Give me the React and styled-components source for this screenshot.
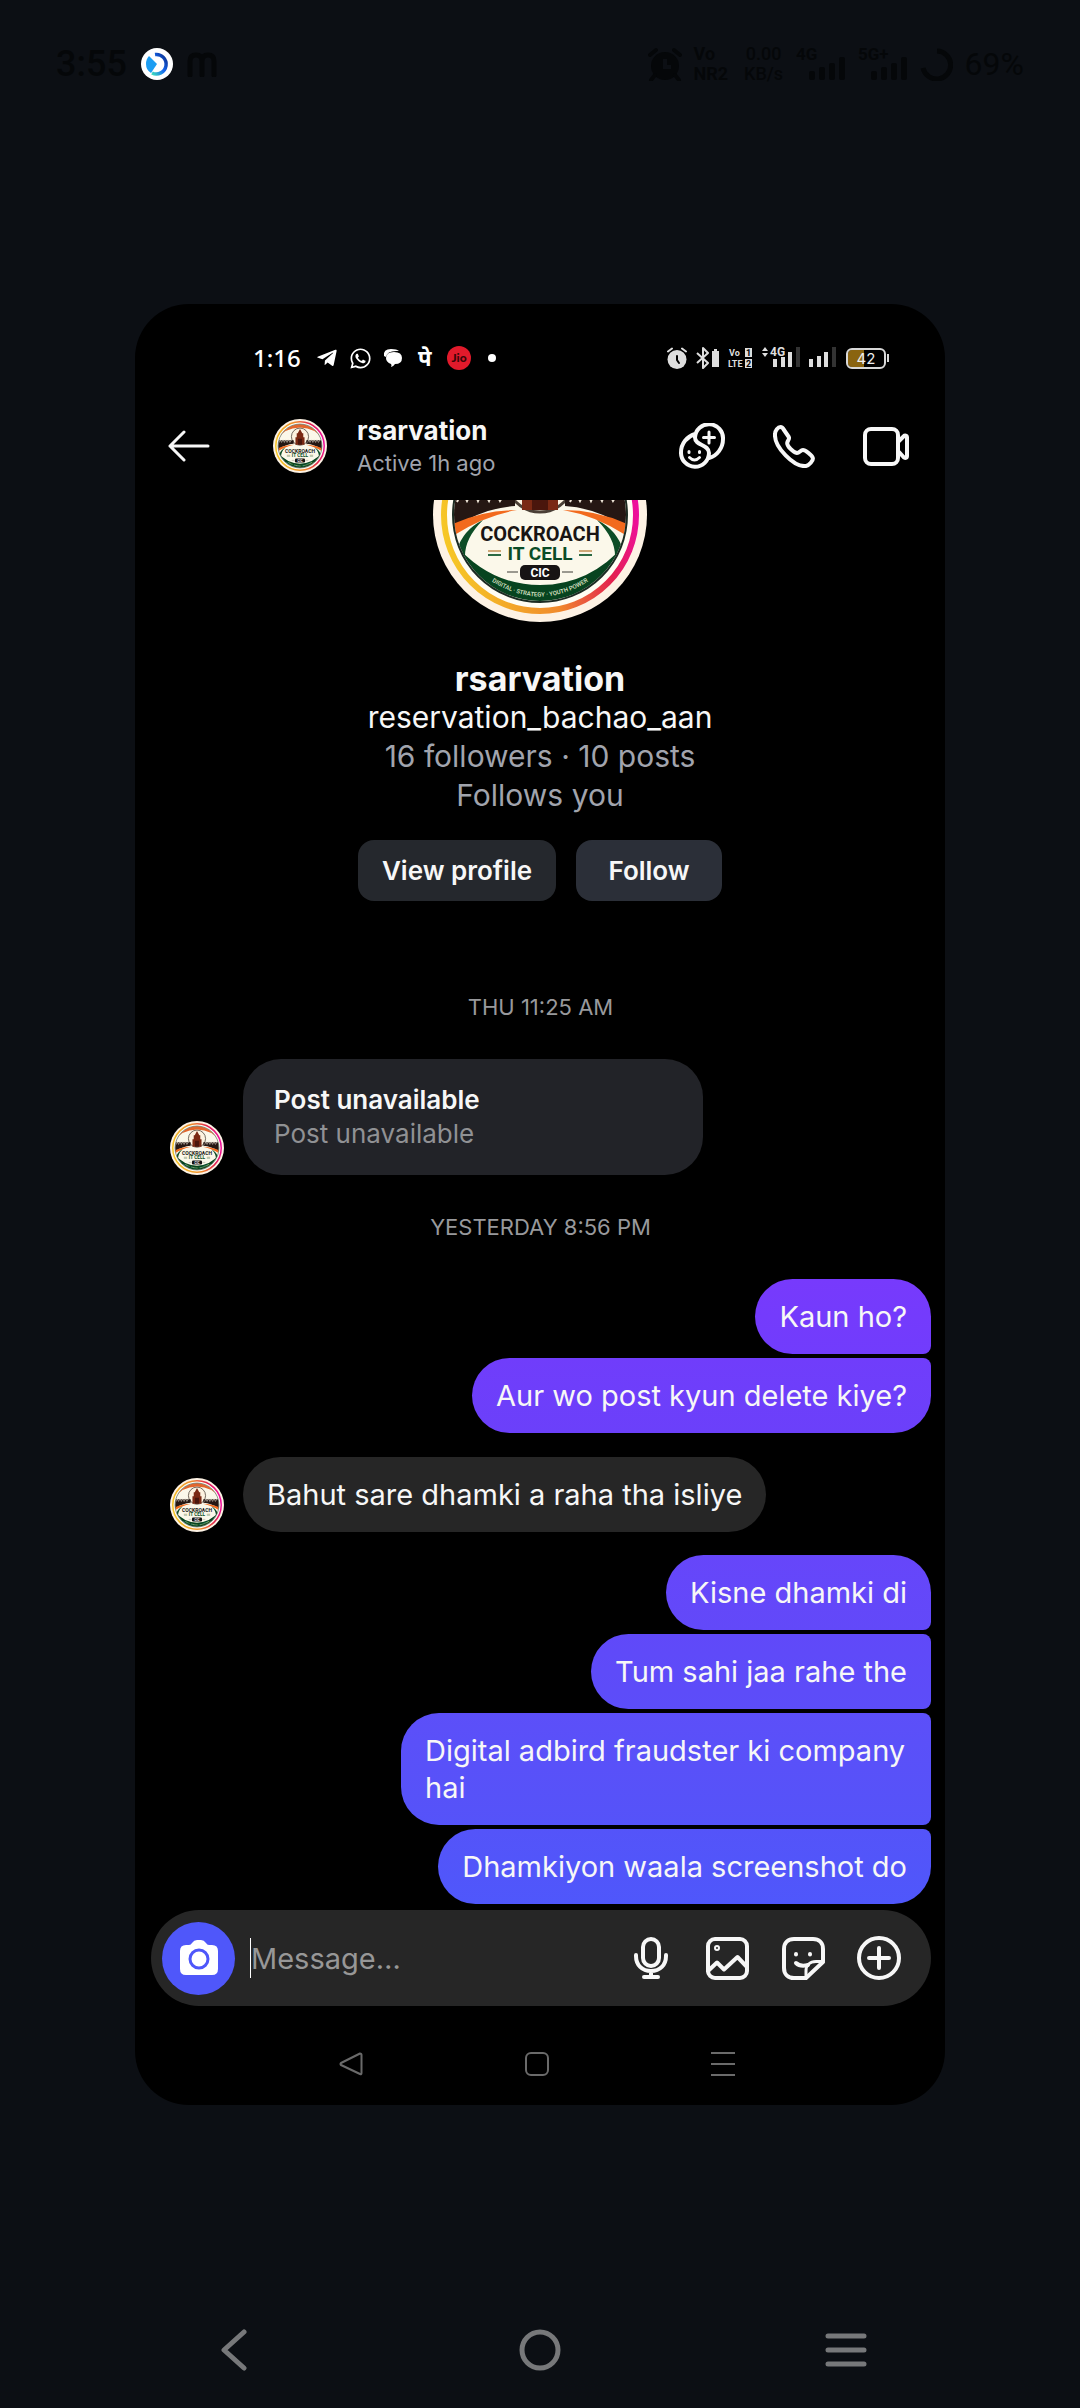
import React, { useId } from "react";
import styled, { createGlobalStyle } from "styled-components";
import { FaTelegramPlane, FaWhatsapp } from "react-icons/fa";

const GlobalStyle = createGlobalStyle`
  * { box-sizing: border-box; }
  body {
    margin: 0;
    background: #0c0f14;
    font-family: Inter, "Noto Sans", sans-serif;
  }
  button, input { font: inherit; margin: 0; padding: 0; border: 0; background: none; color: inherit; }
  h1, h2, p { margin: 0; font-weight: 400; }
`;

const Page = styled.div`
  min-height: 100vh;
  display: flex;
  flex-direction: column;
  align-items: center;
  background: #0c0f14;
`;

/* ---------- Outer system bars ---------- */

const SystemBar = styled.header`
  width: 100%;
  height: 128px;
  padding: 0 56px;
  display: flex;
  align-items: center;
  justify-content: space-between;
  color: #050709;
  font-family: Roboto, sans-serif;
`;

const Cluster = styled.div`
  display: flex;
  align-items: center;
  gap: ${(p) => p.$gap}px;
`;

const Clock = styled.span`
  font-family: Roboto, sans-serif;
  font-size: 36px;
  font-weight: 500;
  line-height: 40px;
`;

const PhoneClock = styled.span`
  margin-right: 4px;
  font-family: "Noto Sans", sans-serif;
  font-size: 24px;
  font-weight: 500;
  line-height: 32px;
`;

const BatteryText = styled.span`
  font-size: 32px;
  line-height: 40px;
`;

const Stacked = styled.span`
  display: flex;
  flex-direction: column;
  align-items: ${(p) => p.$align || "flex-start"};
  width: ${(p) => p.$width}px;
  font-size: 18px;
  line-height: 20px;
  font-weight: ${(p) => p.$weight};
`;

const SystemNav = styled.nav`
  width: 100%;
  height: 116px;
  margin-top: auto;
  padding: 0 213px;
  display: flex;
  align-items: center;
  justify-content: space-between;
  color: #77787a;
`;

const IconButton = styled.button`
  display: flex;
  align-items: center;
  justify-content: center;
  width: ${(p) => p.$size}px;
  height: ${(p) => p.$size}px;
  flex: none;
  cursor: pointer;
`;

/* ---------- Phone card ---------- */

const Phone = styled.main`
  width: 75%;
  margin-top: 176px;
  border-radius: 54px;
  overflow: hidden;
  background: #000;
  color: #f7f7f7;
`;

const PhoneStatus = styled.div`
  height: 108px;
  padding: 0 56px 0 118px;
  display: flex;
  align-items: center;
  justify-content: space-between;
  color: #fff;
`;

const PhoneBattery = styled.span`
  display: flex;
  align-items: center;
  justify-content: center;
  width: 40px;
  height: 21px;
  border: 2px solid #d8d8d8;
  border-radius: 6px;
  background: linear-gradient(90deg, #8a6410 44%, #000 44%);
  background-clip: padding-box;
  color: #eee;
  font-size: 15px;
  line-height: 17px;
`;

const Glyph = styled.span`
  width: 22px;
  font-size: 22px;
  line-height: 24px;
  font-weight: 700;
  text-align: center;
`;

const ChatHeader = styled.header`
  height: 88px;
  padding: 0 36px 20px 33px;
  display: flex;
  align-items: center;
`;

const HeaderAvatar = styled.div`
  display: flex;
  margin: 0 30px 0 63px;
`;

const HeaderName = styled.div`
  flex: 1;
  min-width: 0;
`;

const Title = styled.h1`
  font-size: 26px;
  line-height: 34px;
  font-weight: 700;
`;

const Presence = styled.p`
  font-size: 22px;
  line-height: 30px;
  color: #a1a4ad;
`;

const Profile = styled.section`
  display: flex;
  flex-direction: column;
  align-items: center;
`;

const HeroClip = styled.div`
  height: 122px;
  margin-bottom: 37px;
  overflow: hidden;
  display: flex;
  align-items: flex-end;
`;

const ProfileName = styled.h2`
  font-size: 34px;
  line-height: 39px;
  font-weight: 700;
`;

const ProfileLine = styled.p`
  font-size: 30px;
  line-height: 39px;
  color: ${(p) => (p.$muted ? "#a1a4ad" : "#f7f7f7")};
`;

const Actions = styled.div`
  display: flex;
  gap: 20px;
  margin-top: 25px;
`;

const ActionButton = styled.button`
  height: 61px;
  min-width: 146px;
  padding: 0 24px;
  border-radius: 16px;
  background: ${(p) => p.$tone};
  font-size: 26px;
  line-height: 32px;
  font-weight: 600;
  cursor: pointer;
`;

const Thread = styled.section`
  display: flex;
  flex-direction: column;
  margin-top: 54px;
  padding: 0 14px 6px 35px;
`;

const DateLabel = styled.p`
  margin: 37px 0;
  padding-right: 20px;
  text-align: center;
  font-size: 22px;
  line-height: 30px;
  color: #98999c;
`;

const Group = styled.div`
  display: flex;
  flex-direction: column;
  align-items: flex-end;
  gap: 4px;
`;

const Received = styled.div`
  display: flex;
  align-items: flex-end;
  gap: 19px;
  margin: ${(p) => (p.$spaced ? "24px 0 23px" : "0")};
`;

const PostCard = styled.article`
  width: 460px;
  padding: 24px 31px;
  border-radius: 38px;
  background: #222328;
  font-size: 26px;
  line-height: 34px;
`;

const PostTitle = styled.h2`
  font-size: 26px;
  line-height: 34px;
  font-weight: 600;
`;

const PostNote = styled.p`
  color: #909194;
`;

const Bubble = styled.p`
  max-width: ${(p) => (p.$sent ? "530px" : "80%")};
  padding: 19px 24px;
  border-radius: ${(p) => p.$corners};
  background: ${(p) => p.$fill};
  font-size: 29px;
  line-height: 37px;
`;

const Composer = styled.form`
  display: flex;
  align-items: center;
  height: 96px;
  margin: 0 14px 0 16px;
  padding: 0 30px 0 11px;
  border-radius: 48px;
  background: #262626;
`;

const CameraButton = styled.button`
  display: flex;
  align-items: center;
  justify-content: center;
  flex: none;
  width: 73px;
  height: 73px;
  border-radius: 50%;
  background: #4f57fa;
  cursor: pointer;
`;

const MessageInput = styled.input`
  flex: 1;
  min-width: 0;
  height: 40px;
  margin-left: 15px;
  border-left: 1px solid #fff;
  outline: none;
  font-size: 29px;
  line-height: 36px;
  &::placeholder { color: #979797; opacity: 1; }
`;

const PhoneNav = styled.nav`
  height: 99px;
  padding: 16px 210px 0 204px;
  display: flex;
  align-items: center;
  justify-content: space-between;
  color: #6a6a6a;
`;

/* ---------- Drawings ---------- */

const Stroke = ({ w, h, sw = 4, children }) => (
  <svg width={w} height={h} viewBox={`0 0 ${w} ${h}`} fill="none" stroke="currentColor"
    strokeWidth={sw} strokeLinecap="round" strokeLinejoin="round" aria-hidden="true">
    {children}
  </svg>
);

function Emblem({ size }) {
  const id = useId();
  return (
    <svg width={size} height={size} viewBox="0 0 214 214" role="img" aria-label="Cockroach IT Cell">
      <defs>
        <linearGradient id={`${id}ring`} x1="0" y1="0.6" x2="1" y2="0.4">
          <stop offset="0" stopColor="#f6c726" />
          <stop offset="0.5" stopColor="#f08a2c" />
          <stop offset="0.8" stopColor="#e3204f" />
          <stop offset="1" stopColor="#ee0ea0" />
        </linearGradient>
        <clipPath id={`${id}disc`}><circle cx="107" cy="107" r="86" /></clipPath>
        <path id={`${id}motto`} d="M42 161Q107 216 172 161" />
      </defs>
      <circle cx="107" cy="107" r="107" fill="#fdf2e4" />
      <circle cx="107" cy="107" r="96" fill="#fffdf3" stroke={`url(#${id}ring)`} strokeWidth="6" />
      <g clipPath={`url(#${id}disc)`}>
        <rect width="214" height="214" fill="#fbf8ea" />
        <path d="M20 80 Q30 14 107 14 Q184 14 194 80 Q170 36 107 34 Q44 36 20 80Z" fill="#e2662c" />
        <circle cx="107" cy="70" r="34" fill="#fdf3e0" stroke="#4b4036" strokeWidth="3" />
        <path d="M20 84h62v14q-32 2-62 22z M194 84h-62v14q32 2 62 22z" fill="#251713" />
        <path d="M24 94l5-11 5 10 6-12 5 12 5-11 6 11 5-12 6 12 6-10M137 94l5-11 5 10 6-12 5 12 5-11 6 11 5-12 6 12 6-10" stroke="#efe6d8" strokeWidth="2" fill="none" />
        <path d="M89 102V72h5V56h4l9-16 9 16h4v16h5v30z" fill="#7a2913" />
        <path d="M99 102V78h16v24z" fill="#4a160c" />
        <path d="M20 116Q50 102 84 102Q50 108 20 128z M194 116Q164 102 130 102Q164 108 194 128z" fill="#f26a1d" />
        <path d="M50 112Q30 122 24 142L32 148Q32 130 50 112z M164 112Q184 122 190 142L182 148Q182 130 164 112z" fill="#0d4d26" />
        <path d="M20 134Q56 177 107 177Q158 177 194 134V214H20z" fill="#07441f" />
      </g>
      <circle cx="107" cy="107" r="87" fill="none" stroke="#1c2b22" strokeWidth="2" />
      <g textAnchor="middle" fontFamily="Roboto, sans-serif" fontWeight="700">
        <text x="107" y="133" fontSize="20" fill="#191514">COCKROACH</text>
        <text x="107" y="152" fontSize="19" fill="#0b4c27">IT CELL</text>
        <rect x="87" y="157" width="40" height="15" rx="5" fill="#171414" />
        <text x="107" y="169" fontSize="12" fill="#fff">CIC</text>
        <text fontSize="6" fontWeight="500" fill="#dfe6c9">
          <textPath href={`#${id}motto`} startOffset="50%">DIGITAL · STRATEGY · YOUTH POWER</textPath>
        </text>
      </g>
      <path d="M55 143h13M146 143h13" stroke="#cfa878" strokeWidth="2" />
      <path d="M55 147h13M146 147h13" stroke="#2b6a44" strokeWidth="2" />
      <path d="M74 164h11M129 164h11" stroke="#3a3a34" strokeWidth="1" />
    </svg>
  );
}

const AppBadge = () => (
  <svg width="32" height="32" viewBox="0 0 32 32" aria-hidden="true">
    <defs>
      <linearGradient id="badge" x1="0" y1="1" x2="1" y2="0">
        <stop offset="0" stopColor="#3bdcc0" />
        <stop offset="0.5" stopColor="#1668f0" />
        <stop offset="1" stopColor="#0a2a86" />
      </linearGradient>
    </defs>
    <circle cx="16" cy="16" r="16" fill="#fff" />
    <path d="M14 6.500A9.800 9.800 0 1 1 11 25" fill="none" stroke="url(#badge)" strokeWidth="3.500" />
    <path d="M8 8L16 16L10 25Q5 22 5 16Q5 11 8 8z" fill="#1c9df2" />
  </svg>
);

const Alarm = ({ hands }) => (
  <svg width="34" height="34" viewBox="0 0 34 34" fill="none" strokeLinecap="round" aria-hidden="true">
    <circle cx="17" cy="19" r="14" fill="currentColor" />
    <path d="M2 8l6-5M32 8l-6-5M7 28l-4 5M27 28l4 5" stroke="currentColor" strokeWidth="4" />
    <path d="M17 12v8h6" stroke={hands} strokeWidth="4" strokeLinecap="butt" />
  </svg>
);

const PhoneAlarm = () => (
  <svg width="20" height="22" viewBox="0 0 20 22" fill="none" strokeLinecap="round" aria-hidden="true">
    <circle cx="10" cy="12.500" r="9.500" fill="#dedede" />
    <path d="M1 4.500l4-3M19 4.500l-4-3" stroke="#dedede" strokeWidth="2" />
    <path d="M10 9v4l2 3" stroke="#000" strokeWidth="2" />
  </svg>
);

const BluetoothBattery = () => (
  <svg width="23" height="22" viewBox="0 0 23 22" aria-hidden="true">
    <path d="M1 6L12 16L7 21V1L12 6L1 16" fill="none" stroke="#dedede" strokeWidth="2" strokeLinejoin="round" />
    <path d="M16 4h2V2h3v2h2v16h-7z" fill="#dedede" />
  </svg>
);

const Signal = ({ label }) => (
  <svg width="50" height="44" viewBox="0 0 50 44" fill="currentColor" aria-hidden="true">
    <text x="0" y="18" fontSize="17" fontWeight="700" fontFamily="Roboto, sans-serif">{label}</text>
    <rect x="13" y="29" width="6" height="9" rx="2" />
    <rect x="23" y="25" width="6" height="13" rx="2" />
    <rect x="33" y="21" width="6" height="17" rx="2" />
    <rect x="43" y="15" width="6" height="23" rx="2" />
  </svg>
);

const PhoneSignal = ({ label }) => (
  <svg width={label ? 38 : 28} height="32" viewBox={label ? "0 0 38 32" : "0 0 28 32"} fill="#dedede" aria-hidden="true">
    {label ? (
      <>
        <path d="M0 9l3-4 3 4zM0 11h6l-3 4z" />
        <text x="8" y="14" fontSize="12" fontWeight="700" fontFamily="Roboto, sans-serif">{label}</text>
        <path d="M11 17h4v8h-4zM19 15h4v10h-4zM26 10h4v15h-4z" />
        <path d="M34 5h4v20h-4z" fill="#333" />
      </>
    ) : (
      <>
        <path d="M0 17h4v8H0zM8 14h4v11H8zM15 10h4v15h-4z" />
        <path d="M23 5h4v20h-4z" fill="#333" />
      </>
    )}
  </svg>
);

const VoLte = () => (
  <svg width="25" height="26" viewBox="0 0 25 26" fill="#dedede" aria-hidden="true"
    fontFamily="Roboto, sans-serif" fontWeight="700" fontSize="9">
    <text x="1" y="11">Vo</text>
    <text x="0" y="22">LTE</text>
    <rect x="17" y="3" width="7" height="9" />
    <rect x="17" y="14" width="7" height="9" />
    <text x="18" y="11" fill="#000">1</text>
    <text x="18" y="22" fill="#000">2</text>
  </svg>
);

const ChatDots = () => (
  <svg width="20" height="20" viewBox="0 0 20 20" aria-hidden="true">
    <path d="M1 8Q0 1 8 1q6 0 8 2Q4 2 3 9z" fill="#fff" />
    <path d="M11 4q8 0 8 6t-7 6q-2 3-4 3 1-2 0-3-5-2-5-6 0-6 8-6z" fill="#fff" />
  </svg>
);

const Jio = () => (
  <svg width="24" height="24" viewBox="0 0 24 24" aria-hidden="true">
    <circle cx="12" cy="12" r="12" fill="#e11a2b" />
    <text x="12" y="16" textAnchor="middle" fontSize="12" fontWeight="900" fontFamily="Lato, sans-serif" fill="#3a0508">Jio</text>
  </svg>
);

const Camera = () => (
  <svg width="40" height="36" viewBox="0 0 40 36" aria-hidden="true">
    <path d="M7 5h3q2 0 3-2 2-3 5-3h4q3 0 5 3 1 2 3 2h3q6 0 6 6v18q0 6-6 6H7q-6 0-6-6V11q0-6 6-6z" fill="#fff" />
    <circle cx="20" cy="19" r="9" fill="none" stroke="#4f57fa" strokeWidth="3" />
  </svg>
);

/* ---------- Data ---------- */

const FIRST = "38px 38px 8px 38px";
const MIDDLE = "38px 8px 8px 38px";
const LAST = "38px 8px 38px 38px";

const opening = [
  { text: "Kaun ho?", from: "#773afc", to: "#713cfc", corners: FIRST },
  { text: "Aur wo post kyun delete kiye?", from: "#703dfb", to: "#6b40fa", corners: LAST },
];

const reply = [
  { text: "Kisne dhamki di", from: "#6646fa", to: "#6249f9", corners: FIRST },
  { text: "Tum sahi jaa rahe the", from: "#6049f9", to: "#5c4df9", corners: MIDDLE },
  { text: "Digital adbird fraudster ki company hai", from: "#5c4ff9", to: "#5553f9", corners: MIDDLE },
  { text: "Dhamkiyon waala screenshot do", from: "#5454f9", to: "#4f57fb", corners: LAST },
];

const SentGroup = ({ items }) => (
  <Group>
    {items.map((m) => (
      <Bubble key={m.text} $sent $corners={m.corners} $fill={`linear-gradient(${m.from}, ${m.to})`}>{m.text}</Bubble>
    ))}
  </Group>
);

export default function App() {
  return (
    <Page>
      <GlobalStyle />
      <SystemBar>
        <Cluster $gap={14}>
          <Clock>3:55</Clock>
          <AppBadge />
          <Stroke w={30} h={26} sw={5}>
            <path d="M3 24V10Q3 4 9 4Q15 4 15 10V24M15 10Q15 4 21 4Q27 4 27 10V24" />
          </Stroke>
        </Cluster>
        <Cluster $gap={12}>
          <Alarm hands="#0c0f14" />
          <Stacked $width={38} $weight={700}><span>Vo</span><span>NR2</span></Stacked>
          <Stacked $width={40} $align="center" $weight={500}><span>0.00</span><span>KB/s</span></Stacked>
          <Signal label="4G" />
          <Signal label="5G+" />
          <Stroke w={33} h={33} sw={5}><path d="M17 3A14 14 0 1 1 3 20" strokeLinecap="butt" /></Stroke>
          <BatteryText>69%</BatteryText>
        </Cluster>
      </SystemBar>

      <Phone>
        <PhoneStatus>
          <Cluster $gap={11}>
            <PhoneClock>1:16</PhoneClock>
            <FaTelegramPlane size={22} />
            <FaWhatsapp size={23} />
            <ChatDots />
            <Glyph>पे</Glyph>
            <Jio />
            <svg width="24" height="8" aria-hidden="true"><circle cx="10" cy="4" r="4" fill="#fff" /></svg>
          </Cluster>
          <Cluster $gap={9}>
            <PhoneAlarm />
            <BluetoothBattery />
            <VoLte />
            <PhoneSignal label="4G" />
            <PhoneSignal />
            <Cluster $gap={1}>
              <PhoneBattery>42</PhoneBattery>
              <svg width="2" height="8" aria-hidden="true"><path d="M0 0h2v8H0z" fill="#d8d8d8" /></svg>
            </Cluster>
          </Cluster>
        </PhoneStatus>

        <ChatHeader>
          <IconButton $size={42} aria-label="Back">
            <Stroke w={42} h={32} sw={3}><path d="M40 16H2M16 2L2 16L16 30" /></Stroke>
          </IconButton>
          <HeaderAvatar><Emblem size={54} /></HeaderAvatar>
          <HeaderName>
            <Title>rsarvation</Title>
            <Presence>Active 1h ago</Presence>
          </HeaderName>
          <Cluster $gap={46}>
            <IconButton $size={46} aria-label="Create AI sticker">
              <Stroke w={46} h={46}>
                <path d="M16 11C8 13.500 2 20.500 2 29.500A14 14 0 0 0 30 30C30 21 16 23 16 14.500A14 14 0 0 1 44 16C44 25 38 33 30 35" />
                <path d="M30 9V20M24.500 14.500H35.500" strokeWidth="3" />
                <path d="M10 28.500V29.500M20.500 28.500V29.500M10.500 34.500Q15.500 39.500 20.500 34.500" strokeWidth="3" />
              </Stroke>
            </IconButton>
            <IconButton $size={46} aria-label="Voice call">
              <Stroke w={42} h={43}>
                <path d="M2 9C2 5.500 5 2 7.500 2C9 2 10 3 11 5L15.800 12C17 14 14.500 15.500 14.200 18C14 21 20 27.500 24 28C26.500 28 27.500 25 30 25C32 25 39 30 39.800 33C40.500 35.500 36 40.500 33 41C21 42.500 1 22 2 9Z" />
              </Stroke>
            </IconButton>
            <IconButton $size={46} aria-label="Video call">
              <Stroke w={46} h={39}>
                <rect x="2" y="2" width="33" height="35" rx="6" />
                <path d="M36 14L40.500 9.500C42 8 44 8.500 44 10.500V29C44 31 42 31.500 40.500 30L36 25" />
              </Stroke>
            </IconButton>
          </Cluster>
        </ChatHeader>

        <Profile>
          <HeroClip><Emblem size={214} /></HeroClip>
          <ProfileName>rsarvation</ProfileName>
          <ProfileLine>reservation_bachao_aan</ProfileLine>
          <ProfileLine $muted>16 followers · 10 posts</ProfileLine>
          <ProfileLine $muted>Follows you</ProfileLine>
          <Actions>
            <ActionButton $tone="#25282d">View profile</ActionButton>
            <ActionButton $tone="#2b2f38">Follow</ActionButton>
          </Actions>
        </Profile>

        <Thread>
          <DateLabel>THU 11:25 AM</DateLabel>
          <Received>
            <Emblem size={54} />
            <PostCard>
              <PostTitle>Post unavailable</PostTitle>
              <PostNote>Post unavailable</PostNote>
            </PostCard>
          </Received>
          <DateLabel>YESTERDAY 8:56 PM</DateLabel>
          <SentGroup items={opening} />
          <Received $spaced>
            <Emblem size={54} />
            <Bubble $corners="38px" $fill="#262626">Bahut sare dhamki a raha tha isliye</Bubble>
          </Received>
          <SentGroup items={reply} />
        </Thread>

        <Composer onSubmit={(e) => e.preventDefault()}>
          <CameraButton type="button" aria-label="Open camera"><Camera /></CameraButton>
          <MessageInput aria-label="Message" placeholder="Message…" />
          <Cluster $gap={32}>
            <IconButton $size={44} type="button" aria-label="Record voice">
              <Stroke w={34} h={42}>
                <rect x="9" y="2" width="16" height="27" rx="8" />
                <path d="M2 18V19C2 28 8 34 17 34C26 34 32 28 32 19V18M17 34V40M10 40H24" />
              </Stroke>
            </IconButton>
            <IconButton $size={44} type="button" aria-label="Add photo">
              <Stroke w={43} h={43}>
                <rect x="2" y="2" width="39" height="39" rx="7" />
                <circle cx="11" cy="11" r="1" />
                <path d="M2 34L11 25.500L18 32.500L31.500 20L41 30" />
              </Stroke>
            </IconButton>
            <IconButton $size={44} type="button" aria-label="Add sticker">
              <Stroke w={43} h={43}>
                <path d="M41 24V12C41 6 37 2 31 2H12C6 2 2 6 2 12V31C2 37 6 41 12 41H24L41 25" />
                <path d="M24 41V34C24 28 28 24.500 34 24.500H41" strokeWidth="3" />
                <path d="M14 17V17.500M28 17V17.500M14 26Q18 30 26 28" />
              </Stroke>
            </IconButton>
            <IconButton $size={44} type="button" aria-label="More">
              <Stroke w={44} h={44}>
                <circle cx="22" cy="22" r="20" />
                <path d="M22 12V32M12 22H32" />
              </Stroke>
            </IconButton>
          </Cluster>
        </Composer>

        <PhoneNav>
          <IconButton $size={24} aria-label="Back"><Stroke w={24} h={24} sw={2}><path d="M21 1.500Q22.500 1.500 22.500 3V21Q22.500 23 21 22L2 13Q1 12 2 11z" /></Stroke></IconButton>
          <IconButton $size={24} aria-label="Home"><Stroke w={24} h={24} sw={2}><rect x="1" y="1" width="22" height="22" rx="5" /></Stroke></IconButton>
          <IconButton $size={24} aria-label="Recent"><Stroke w={24} h={24} sw={2}><path d="M1 1H23M1 12H23M1 23H23" strokeLinecap="square" /></Stroke></IconButton>
        </PhoneNav>
      </Phone>

      <SystemNav>
        <IconButton $size={42} aria-label="Back"><Stroke w={42} h={42} sw={5}><path d="M31 3L11 21L31 39" /></Stroke></IconButton>
        <IconButton $size={42} aria-label="Home"><Stroke w={42} h={42} sw={5}><circle cx="21" cy="21" r="18" /></Stroke></IconButton>
        <IconButton $size={42} aria-label="Recent"><Stroke w={42} h={42} sw={5}><path d="M3 7H39M3 21H39M3 35H39" /></Stroke></IconButton>
      </SystemNav>
    </Page>
  );
}
